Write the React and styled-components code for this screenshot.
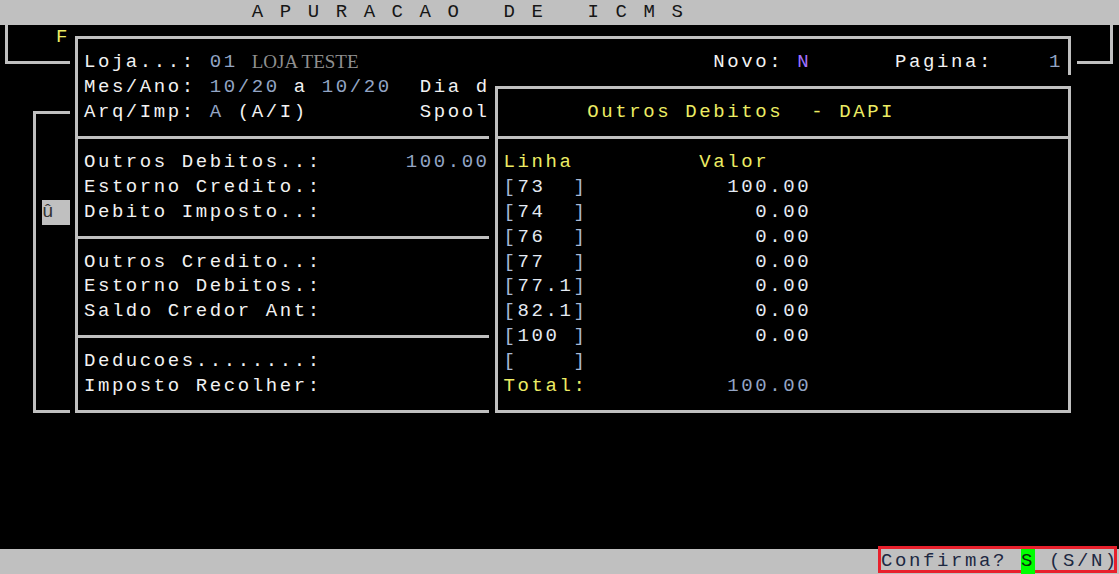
import React from 'react';
import styled, { createGlobalStyle } from 'styled-components';

// 80 x 23 character terminal, each cell is one grid track
const COLS = 80;
const ROWS = 23;
const CW = 1119 / COLS;
const RH = 574 / ROWS;
const FS = 19;
const LINE = 3;

const tones = {
  text: '#f2f2f2',
  value: '#93a5c5',
  yellow: '#ecec64',
  purple: '#a070ff',
  bright: '#e4eaf3',
  bracket: '#a9bad6',
  dark: '#161616',
  ink: '#1d2842',
};

const GlobalStyle = createGlobalStyle`
  html, body {
    margin: 0;
    padding: 0;
    background: #000;
  }
`;

const Screen = styled.div`
  width: 1119px;
  height: 574px;
  overflow: hidden;
  background: #000;
  display: grid;
  grid-template-columns: repeat(${COLS}, ${CW}px);
  grid-template-rows: repeat(${ROWS}, ${RH}px);
  font-family: "Liberation Mono", "Courier New", monospace;
  font-size: ${FS}px;
  line-height: ${RH}px;
`;

const Bar = styled.div`
  grid-column: 1 / -1;
  grid-row: ${(p) => p.$row + 1};
  background: #c0c0c0;
  display: grid;
  grid-template-columns: repeat(${COLS}, ${CW}px);
  grid-template-rows: ${RH}px;
`;

const Window = styled.div`
  grid-column: ${(p) => p.$col + 1} / span ${(p) => p.$cols};
  grid-row: ${(p) => p.$row + 1} / span ${(p) => p.$rows};
  background: #000;
  display: grid;
  grid-template-columns: repeat(${(p) => p.$cols}, ${CW}px);
  grid-template-rows: repeat(${(p) => p.$rows}, ${RH}px);
`;

const Frame = styled.div`
  grid-column: 1 / -1;
  grid-row: 1 / -1;
  margin: ${(p) => (p.$open ? 0 : RH / 2 - LINE / 2)}px ${CW / 2 - LINE / 2}px
    ${RH / 2 - LINE / 2}px;
  border: ${LINE}px solid #c0c0c0;
  border-top-width: ${(p) => (p.$open ? 0 : LINE)}px;
`;

const Rule = styled.div`
  grid-column: 1 / -1;
  grid-row: ${(p) => p.$row + 1};
  align-self: center;
  height: ${LINE}px;
  margin: 0 ${CW / 2 - LINE / 2}px;
  background: #c0c0c0;
`;

const Line = styled.div`
  grid-column: ${(p) => p.$col + 1} / -1;
  grid-row: ${(p) => p.$row + 1};
  white-space: pre;
  letter-spacing: ${CW - 0.6 * FS}px;
  color: ${(p) => tones[p.$tone || 'text']};
`;

const Tone = styled.span`
  color: ${(p) => tones[p.$tone]};
`;

const Serif = styled.div`
  grid-column: ${(p) => p.$col + 1} / span 12;
  grid-row: ${(p) => p.$row + 1};
  font-family: "Liberation Serif", "Times New Roman", serif;
  font-size: 19px;
  color: #8f8f8f;
  white-space: pre;
`;

const Cursor = styled.div`
  grid-column: ${(p) => p.$col + 1} / span 2;
  grid-row: ${(p) => p.$row + 1};
  background: #c0c0c0;
  color: #333;
`;

const Confirm = styled.div`
  grid-column: 64 / -1;
  grid-row: 1;
  margin: -3px 2px 1px -3px;
  border: 3px solid #e8202c;
  white-space: pre;
  letter-spacing: ${CW - 0.6 * FS}px;
  color: ${tones.ink};
`;

const Key = styled.span`
  display: inline-block;
  background: #00ff00;
  color: #0a2a0a;
`;

const entries = [
  ['73', '100.00'],
  ['74', '0.00'],
  ['76', '0.00'],
  ['77', '0.00'],
  ['77.1', '0.00'],
  ['82.1', '0.00'],
  ['100', '0.00'],
  ['', ''],
];

const leftRows = [
  [5, 'Outros Debitos..:', '100.00'],
  [6, 'Estorno Credito.:'],
  [7, 'Debito Imposto..:'],
  [9, 'Outros Credito..:'],
  [10, 'Estorno Debitos.:'],
  [11, 'Saldo Credor Ant:'],
  [13, 'Deducoes........:'],
  [14, 'Imposto Recolher:'],
];

export default function App() {
  return (
    <>
      <GlobalStyle />
      <Screen>
        <Bar $row={0}>
          <Line $col={18} $row={0} $tone="dark">
            A P U R A C A O   D E   I C M S
          </Line>
        </Bar>

        {/* window behind, only its corners show */}
        <Window $col={0} $row={1} $cols={80} $rows={2}>
          <Frame $open />
          <Line $col={4} $row={0} $tone="yellow">F</Line>
        </Window>

        <Window $col={2} $row={4} $cols={10} $rows={13}>
          <Frame />
          <Cursor $col={1} $row={4}>û</Cursor>
        </Window>

        {/* main form */}
        <Window $col={5} $row={1} $cols={72} $rows={16}>
          <Frame />
          <Line $col={1} $row={1}>
            Loja...: <Tone $tone="value">01</Tone>
          </Line>
          <Serif $col={13} $row={1}>LOJA TESTE</Serif>
          <Line $col={46} $row={1}>
            Novo: <Tone $tone="purple">N</Tone>
          </Line>
          <Line $col={59} $row={1}>
            {'Pagina:    '}
            <Tone $tone="value">1</Tone>
          </Line>
          <Line $col={1} $row={2}>
            Mes/Ano: <Tone $tone="value">10/20</Tone> a{' '}
            <Tone $tone="value">10/20</Tone>
            {'  Dia d'}
          </Line>
          <Line $col={1} $row={3}>
            Arq/Imp: <Tone $tone="value">A</Tone>
            {' (A/I)        Spool'}
          </Line>
          <Rule $row={4} />
          <Rule $row={8} />
          <Rule $row={12} />
          {leftRows.map(([row, label, value]) => (
            <Line key={row} $col={1} $row={row}>
              {label}
              {value && <Tone $tone="value">{'      ' + value}</Tone>}
            </Line>
          ))}
        </Window>

        {/* DAPI popup */}
        <Window $col={35} $row={3} $cols={42} $rows={14}>
          <Frame />
          <Line $col={7} $row={1} $tone="yellow">
            Outros Debitos  - DAPI
          </Line>
          <Rule $row={2} />
          <Line $col={1} $row={3} $tone="yellow">Linha</Line>
          <Line $col={15} $row={3} $tone="yellow">Valor</Line>
          {entries.map(([code, value], i) => (
            <Line key={i} $col={1} $row={4 + i} $tone="bright">
              <Tone $tone="bracket">[</Tone>
              {code.padEnd(4)}
              <Tone $tone="bracket">]</Tone>
              {value.padStart(16)}
            </Line>
          ))}
          <Line $col={1} $row={12} $tone="yellow">
            Total:<Tone $tone="value">{'100.00'.padStart(16)}</Tone>
          </Line>
        </Window>

        <Bar $row={22}>
          <Confirm>
            Confirma? <Key>S</Key> (S/N)
          </Confirm>
        </Bar>
      </Screen>
    </>
  );
}
